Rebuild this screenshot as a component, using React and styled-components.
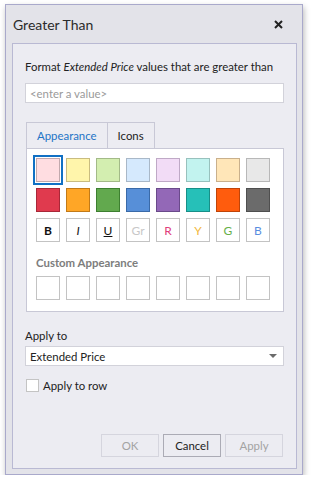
import styled, { createGlobalStyle, css } from "styled-components";

const GlobalStyle = createGlobalStyle`
  body {
    margin: 0;
    background: #fff;
    font-family: "Segoe UI", Lato, "Open Sans", sans-serif;
    font-size: 11.4px;
    color: #222;
  }
`;

const Window = styled.div`
  box-sizing: border-box;
  width: 298px;
  height: 471px;
  margin: 4px 0 0 5px;
  border: 1px solid #a9a9cb;
  background: #e3e3e9;
  box-shadow: 1px 3px 6px rgba(0, 0, 0, 0.28);
  padding: 0 5px 5px 6px;
  display: flex;
  flex-direction: column;
`;

const TitleBar = styled.div`
  height: 38px;
  display: flex;
  align-items: center;
  justify-content: space-between;
  padding: 0 14px 0 1px;
`;

const Title = styled.div`
  font-size: 14px;
  color: #2b2b2b;
`;

const CloseIcon = () => (
  <svg width="9" height="9" viewBox="0 0 9 9">
    <path d="M1 1 L8 8 M8 1 L1 8" stroke="#222" strokeWidth="2" />
  </svg>
);

const Panel = styled.div`
  flex: 1;
  border: 1px solid #b9b9d3;
  background: #ececf2;
  padding: 15px 12px 11px 12px;
  display: flex;
  flex-direction: column;
`;

const Prompt = styled.div`
  line-height: 16px;
  white-space: nowrap;
  em {
    font-style: italic;
  }
`;

const TextBox = styled.div`
  box-sizing: border-box;
  height: 20px;
  margin-top: 8px;
  border: 1px solid #d2d2da;
  background: #fff;
  padding: 0 4px;
  display: flex;
  align-items: center;
  justify-content: space-between;
  color: ${(p) => (p.$placeholder ? "#9a9a9a" : "#222")};
`;

const Tabs = styled.div`
  margin: 19px 0 0 1px;
`;

const TabRow = styled.div`
  display: flex;
`;

const Tab = styled.div`
  box-sizing: border-box;
  height: 26px;
  padding: 0 10px;
  border: 1px solid #c8c8d6;
  border-left-width: ${(p) => (p.$first ? "1px" : "0")};
  border-bottom: none;
  display: flex;
  align-items: center;
  background: #ececf2;
  color: ${(p) => (p.$active ? "#1e74c6" : "#222")};
`;

const TabBody = styled.div`
  background: #fff;
  border: 1px solid #c8c8d6;
  padding: 9px 12px 11px 9px;
`;

const Grid = styled.div`
  display: grid;
  grid-template-columns: repeat(8, 24px);
  gap: 6px;
`;

const Swatch = styled.div`
  box-sizing: border-box;
  width: 24px;
  height: 24px;
  border: 1px solid ${(p) => p.$border || "#c3c3c3"};
  background: ${(p) => p.$fill || "#fff"};
  display: flex;
  align-items: center;
  justify-content: center;
  font-size: 12px;
  color: ${(p) => p.$color || "#222"};
  ${(p) =>
    p.$selected &&
    css`
      box-shadow: 0 0 0 1px #fff, 0 0 0 3px #1170c4;
    `}
`;

const SectionLabel = styled.div`
  margin: 14px 0 6px;
  font-weight: bold;
  color: #7d7d7d;
  line-height: 14px;
`;

const FieldLabel = styled.div`
  margin-top: 16px;
  line-height: 16px;
`;

const Combo = styled(TextBox)`
  margin-top: 2px;
`;

const Arrow = styled.span`
  width: 0;
  height: 0;
  margin-right: 2px;
  border-left: 4px solid transparent;
  border-right: 4px solid transparent;
  border-top: 4px solid #6b6b6b;
`;

const CheckRow = styled.label`
  margin-top: 13px;
  display: flex;
  align-items: center;
  gap: 4px;
  padding-left: 1px;
`;

const Box = styled.span`
  box-sizing: border-box;
  width: 13px;
  height: 13px;
  border: 1px solid #c4c4c4;
  background: #fff;
`;

const Buttons = styled.div`
  margin-top: auto;
  display: flex;
  justify-content: flex-end;
  gap: 4px;
  padding-right: 1px;
`;

const Button = styled.div`
  box-sizing: border-box;
  width: 58px;
  height: 23px;
  border: 1px solid ${(p) => (p.$disabled ? "#d5d5de" : "#ababb5")};
  color: ${(p) => (p.$disabled ? "#a3a3a3" : "#222")};
  background: #ececf2;
  display: flex;
  align-items: center;
  justify-content: center;
`;

const lightColors = [
  ["#ffdde1", "#c2a9ad"],
  ["#fff5ab", "#c9bc80"],
  ["#d3eeb0", "#a3ba88"],
  ["#d5e9fd", "#a9b8c8"],
  ["#f2dcf6", "#bfa9c6"],
  ["#c2f3ef", "#98c1bd"],
  ["#ffe6b8", "#c9b08c"],
  ["#e8e8e8", "#b8b8b8"],
];

const darkColors = [
  ["#e03a4e", "#a82838"],
  ["#ffa626", "#c27a18"],
  ["#62a94e", "#3d7f30"],
  ["#578fd8", "#3a6aa8"],
  ["#9368b7", "#6a4a8a"],
  ["#26c0b8", "#188f88"],
  ["#ff5c0d", "#c04408"],
  ["#6b6b6b", "#4f4f4f"],
];

const fontStyles = [
  { text: <b>B</b>, color: "#111" },
  { text: <i>I</i>, color: "#111" },
  { text: <u>U</u>, color: "#111" },
  { text: "Gr", color: "#c8c8c8" },
  { text: "R", color: "#e0407a" },
  { text: "Y", color: "#f2b840" },
  { text: "G", color: "#66b048" },
  { text: "B", color: "#5a8ee0" },
];

export default function App() {
  return (
    <>
      <GlobalStyle />
      <Window>
        <TitleBar>
          <Title>Greater Than</Title>
          <CloseIcon />
        </TitleBar>
        <Panel>
          <Prompt>
            Format <em>Extended Price</em> values that are greater than
          </Prompt>
          <TextBox $placeholder>&lt;enter a value&gt;</TextBox>

          <Tabs>
            <TabRow>
              <Tab $first $active>
                Appearance
              </Tab>
              <Tab>Icons</Tab>
            </TabRow>
            <TabBody>
              <Grid>
                {lightColors.map(([fill, border], i) => (
                  <Swatch key={"l" + i} $fill={fill} $border={border} $selected={i === 0} />
                ))}
                {darkColors.map(([fill, border], i) => (
                  <Swatch key={"d" + i} $fill={fill} $border={border} />
                ))}
                {fontStyles.map((s, i) => (
                  <Swatch key={"f" + i} $color={s.color}>
                    {s.text}
                  </Swatch>
                ))}
              </Grid>
              <SectionLabel>Custom Appearance</SectionLabel>
              <Grid>
                {Array.from({ length: 8 }).map((_, i) => (
                  <Swatch key={"c" + i} />
                ))}
              </Grid>
            </TabBody>
          </Tabs>

          <FieldLabel>Apply to</FieldLabel>
          <Combo>
            Extended Price
            <Arrow />
          </Combo>
          <CheckRow>
            <Box />
            Apply to row
          </CheckRow>

          <Buttons>
            <Button $disabled>OK</Button>
            <Button>Cancel</Button>
            <Button $disabled>Apply</Button>
          </Buttons>
        </Panel>
      </Window>
    </>
  );
}
